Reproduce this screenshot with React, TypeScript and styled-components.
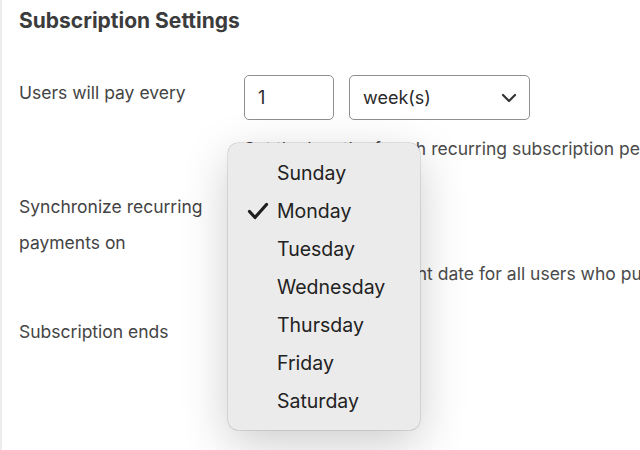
import { createGlobalStyle, styled } from "styled-components"

const GlobalStyle = createGlobalStyle`
  html, body {
    margin: 0;
    padding: 0;
    background: #fff;
    overflow: hidden;
  }
  body {
    font-family: Inter, "Liberation Sans", Arial, sans-serif;
  }
`

const days = ["Sunday", "Monday", "Tuesday", "Wednesday", "Thursday", "Friday", "Saturday"]

export default function App() {
  return (
    <>
      <GlobalStyle />
      <Page>
        <Title>Subscription Settings</Title>
        <Form>
          <Label>Users will pay every</Label>
          <Field>
            <Controls>
              <NumberBox>1</NumberBox>
              <SelectBox>
                week(s)
                <svg width="16" height="10" viewBox="0 0 16 10">
                  <path d="M2 2 L8 8 L14 2" fill="none" stroke="#333" strokeWidth="2.2" strokeLinecap="round" strokeLinejoin="round" />
                </svg>
              </SelectBox>
            </Controls>
            <Description $gap={11}>Set the length of each recurring subscription period.</Description>
          </Field>

          <Label>Synchronize recurring<br />payments on</Label>
          <Field>
            <Controls>
              <SelectBox $width={170}>Monday</SelectBox>
            </Controls>
            <Description $gap={22}>Set a renewal payment date for all users who purchase this membership.</Description>
          </Field>

          <Label>Subscription ends</Label>
          <Field />
        </Form>

        <Menu>
          {days.map(d => (
            <MenuItem key={d}>
              <Check>
                {d === "Monday" && (
                  <svg width="22" height="18" viewBox="0 0 22 18">
                    <path d="M2.5 9.5 L8 15.5 L19.5 2.5" fill="none" stroke="#1e1e1e" strokeWidth="3.2" strokeLinecap="round" strokeLinejoin="round" />
                  </svg>
                )}
              </Check>
              {d}
            </MenuItem>
          ))}
        </Menu>
      </Page>
    </>
  )
}

const Page = styled.div`
  position: relative;
  height: 450px;
  box-sizing: border-box;
  border-left: 2px solid #ececec;
  padding: 7px 0 0 17px;
  color: #3f3f3f;
  white-space: nowrap;
  overflow: hidden;
`

const Title = styled.h2`
  margin: 0;
  font-size: 21px;
  line-height: 28px;
  font-weight: 700;
  color: #3c3c3c;
`

const Form = styled.div`
  display: grid;
  grid-template-columns: 225px 1fr;
  row-gap: 22px;
  margin-top: 40px;
`

const Label = styled.div`
  font-size: 17.5px;
  line-height: 36px;
  color: #444;
`

const Field = styled.div`
  display: flex;
  flex-direction: column;
  min-width: 0;
`

const Controls = styled.div`
  display: flex;
  gap: 15px;
`

const NumberBox = styled.div`
  box-sizing: border-box;
  width: 90px;
  height: 45px;
  border: 1px solid #8f8f8f;
  border-radius: 5px;
  padding-left: 13px;
  display: flex;
  align-items: center;
  font-size: 18px;
  color: #2a2a2a;
`

const SelectBox = styled.div<{ $width?: number }>`
  box-sizing: border-box;
  width: ${p => p.$width ?? 181}px;
  height: 45px;
  border: 1px solid #8f8f8f;
  border-radius: 5px;
  padding: 0 12px 0 13px;
  display: flex;
  align-items: center;
  justify-content: space-between;
  font-size: 18px;
  color: #2a2a2a;
`

const Description = styled.div<{ $gap: number }>`
  margin-top: ${p => p.$gap}px;
  font-size: 17.5px;
  line-height: 36px;
  color: #4a4a4a;
`

const Menu = styled.ul`
  position: absolute;
  left: 226px;
  top: 143px;
  width: 192px;
  margin: 0;
  padding: 11px 0 10px;
  list-style: none;
  background: #ebebeb;
  border-radius: 10px;
  box-shadow: 0 0 0 0.5px rgba(0, 0, 0, 0.2), 0 14px 48px rgba(0, 0, 0, 0.2);
`

const MenuItem = styled.li`
  display: flex;
  align-items: center;
  height: 38px;
  font-size: 19.5px;
  color: #222;
`

const Check = styled.span`
  width: 49px;
  padding-left: 19px;
  box-sizing: border-box;
  display: flex;
  align-items: center;
`
